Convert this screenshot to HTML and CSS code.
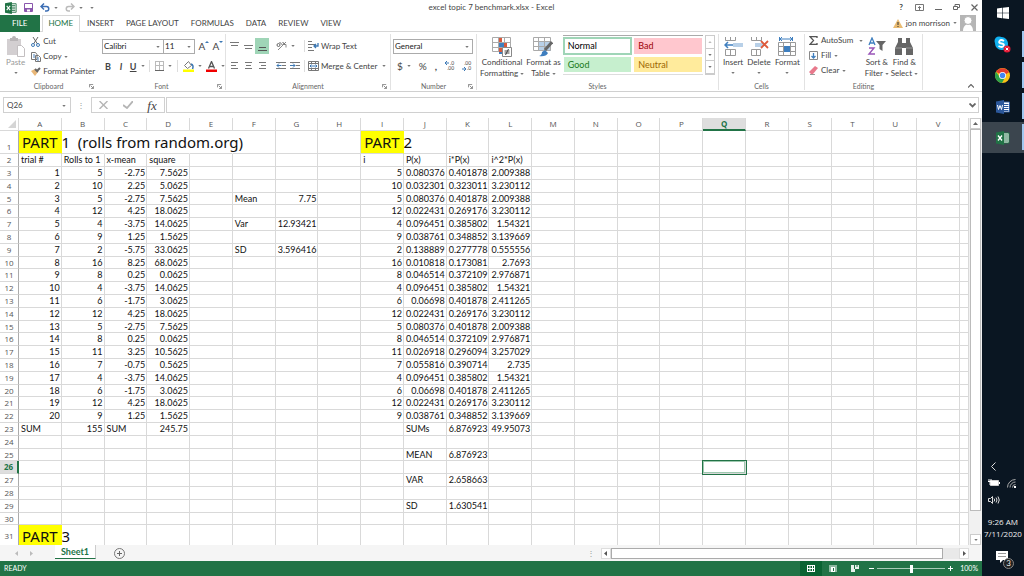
FILE: index.html
```html
<!DOCTYPE html>
<html lang="en">
<head>
<meta charset="utf-8">
<title>excel topic 7 benchmark.xlsx - Excel</title>
<link rel="stylesheet" href="styles.css">
</head>
<body>
<svg class="sprite" aria-hidden="true">
  <symbol id="caret" viewBox="0 0 5 3"><path d="M0 0h5L2.500 3z" fill="#777"/></symbol>
  <symbol id="launch" viewBox="0 0 6 6"><path d="M.5 4V.5H5M2 2l3 3M5.500 2.500v3h-3" fill="none" stroke="#777"/></symbol>
  <symbol id="excel" viewBox="0 0 14 14"><path d="M7 2h6v10H7z" fill="#fff" stroke="#217346"/><path d="M8 4h4M8 6h4M8 8h4M8 10h4" stroke="#217346"/><path d="M0 1.500L8 0v14l-8-1.500z" fill="#217346"/><path d="M2 4.500l4 5M6 4.500l-4 5" stroke="#fff" stroke-width="1.300"/></symbol>
</svg>

<main class="app">
  <header class="titlebar">
    <div class="quick">
      <svg width="12" height="12"><use href="#excel"/></svg>
      <button aria-label="Save"><svg width="9" height="9" viewBox="0 0 9 9"><path d="M.5.5h8v8h-8z" fill="#fff" stroke="#8a57ad"/><path d="M1 5h7v3.500H1z" fill="#8a57ad"/><path d="M3 6.500h3v2H3z" fill="#fff"/></svg></button>
      <button class="drop" aria-label="Undo"><svg width="10" height="9" viewBox="0 0 10 9"><path d="M4 .5L1 3.500l3 3M1 3.500h5.500a2 2 0 0 1 0 4.500H5" fill="none" stroke="#3c6eb4" stroke-width="1.500"/></svg><svg class="caret"><use href="#caret"/></svg></button>
      <button class="drop" aria-label="Redo"><svg width="10" height="9" viewBox="0 0 10 9"><path d="M6 .5l3 3-3 3M9 3.500H3.500a2 2 0 0 0 0 4.500H5" fill="none" stroke="#bbb" stroke-width="1.500"/></svg><svg class="caret"><use href="#caret"/></svg></button>
      <button aria-label="Customize"><svg class="caret"><use href="#caret"/></svg></button>
    </div>
    <h1 class="doc">excel topic 7 benchmark.xlsx - Excel</h1>
    <div class="winbtns">
      <button aria-label="Help"><b>?</b></button>
      <button aria-label="Ribbon display"><svg width="9" height="7" viewBox="0 0 9 7"><path d="M.5.5h8v6h-8zM4.500 6V2.500M3 4l1.500-1.500L6 4" fill="none" stroke="#777"/></svg></button>
      <button aria-label="Minimize"><svg width="7" height="7" viewBox="0 0 7 7"><path d="M0 5.500h7" stroke="#666"/></svg></button>
      <button aria-label="Restore"><svg width="7" height="7" viewBox="0 0 7 7"><path d="M.5 2.500h4v3h-4zM2 2V.5h4.500v3H5" fill="none" stroke="#666"/></svg></button>
      <button aria-label="Close"><svg width="7" height="7" viewBox="0 0 7 7"><path d="M.5.5l6 6M6.500.5l-6 6" stroke="#666" stroke-width="1.200"/></svg></button>
    </div>
  </header>

  <nav class="tabs">
    <a class="file" href="#file">FILE</a>
    <a class="current" href="#home">HOME</a>
    <a href="#insert">INSERT</a>
    <a href="#layout">PAGE LAYOUT</a>
    <a href="#formulas">FORMULAS</a>
    <a href="#data">DATA</a>
    <a href="#review">REVIEW</a>
    <a href="#view">VIEW</a>
    <button class="user"><svg width="10" height="9" viewBox="0 0 10 9"><path d="M5 0l5 9H0z" fill="#e9bb72"/><path d="M5 3v3M5 7v1" stroke="#333"/></svg>jon morrison<svg class="caret"><use href="#caret"/></svg><svg width="16" height="16" viewBox="0 0 16 16"><path d="M0 0h16v16H0z" fill="#b5b5b5"/><path d="M3 16c0-9 10-9 10 0z" fill="#fff"/><circle cx="8" cy="5.500" r="4" fill="#fff" stroke="#b5b5b5"/></svg></button>
  </nav>

  <section class="ribbon">
    <div class="group clipboard">
      <div class="tools">
        <button class="big paste"><svg width="18" height="21" viewBox="0 0 18 21"><path d="M0 3h14v16H0z" fill="#d3cfd1"/><path d="M3 2h2a2 2 0 0 1 4 0h2v3H3z" fill="#b9b5b7"/><path d="M10.500 9.500h4l3 3v8h-7z" fill="#fff" stroke="#c3bfc1"/></svg>Paste<svg class="caret"><use href="#caret"/></svg></button>
        <div class="stack">
          <button><svg width="10" height="10" viewBox="0 0 10 10"><path d="M2 0l4.500 7M7 0L2.500 7" stroke="#666" fill="none"/><circle cx="2" cy="8" r="1.500" fill="none" stroke="#3c78b4"/><circle cx="7" cy="8" r="1.500" fill="none" stroke="#3c78b4"/></svg>Cut</button>
          <button><svg width="10" height="10" viewBox="0 0 10 10"><path d="M.5.500h4l1.500 2v5H.5zM4.500 3.500h3l2 2v4h-5z" fill="#fff" stroke="#777"/><path d="M2 3h2M2 5h2M6 6h2M6 8h2" stroke="#4a82bd"/></svg>Copy<svg class="caret"><use href="#caret"/></svg></button>
          <button><svg width="10" height="10" viewBox="0 0 10 10"><path d="M0 4l4-2 3 3-3 4z" fill="#e9b778"/><path d="M4 2l3 3M6 4l3-3" stroke="#666" stroke-width="2"/></svg>Format Painter</button>
        </div>
      </div>
      <footer>Clipboard<svg class="launch"><use href="#launch"/></svg></footer>
    </div>

    <div class="group font">
      <div class="tools rows">
        <div class="line">
          <div class="combo"><label class="pick face"><select aria-label="Font"><option>Calibri</option></select><svg class="caret"><use href="#caret"/></svg></label><label class="pick size"><select aria-label="Font size"><option>11</option></select><svg class="caret"><use href="#caret"/></svg></label></div>
          <button class="grow" aria-label="Increase font size">A<svg width="4" height="3" viewBox="0 0 4 3"><path d="M0 2l2-2 2 2z" fill="#3c78b4"/></svg></button>
          <button class="grow" aria-label="Decrease font size">A<svg width="4" height="3" viewBox="0 0 4 3"><path d="M0 0l2 2 2-2z" fill="#3c78b4"/></svg></button>
        </div>
        <div class="line fmt">
          <button aria-label="Bold"><b>B</b></button>
          <button aria-label="Italic"><b><i>I</i></b></button>
          <button class="drop" aria-label="Underline"><b><u>U</u></b><svg class="caret"><use href="#caret"/></svg></button>
          <span class="sep"></span>
          <button class="drop" aria-label="Borders"><svg width="9" height="10" viewBox="0 0 9 10"><path d="M.5 0v9M4.500 0v9M8.500 0v9M0 .5h9M0 4.500h9" stroke="#bbb"/><path d="M0 9.500h9" stroke="#666"/></svg><svg class="caret"><use href="#caret"/></svg></button>
          <span class="sep"></span>
          <button class="drop" aria-label="Fill color"><svg width="11" height="11" viewBox="0 0 11 11"><path d="M1.500 4.500l4-4 3 4-4 3z" fill="#fff" stroke="#777"/><path d="M8 3q3 1 1.500 5" fill="none" stroke="#3c78b4" stroke-width="1.500"/><path d="M0 8.500h11v2.500H0z" fill="#ff0"/></svg><svg class="caret"><use href="#caret"/></svg></button>
          <button class="drop" aria-label="Font color"><svg width="11" height="11" viewBox="0 0 11 11"><path d="M2.500 7.500l3-7 3 7M3.500 5.500h4" fill="none" stroke="#555" stroke-width="1.300"/><path d="M0 8.500h11v2.500H0z" fill="#f00000"/></svg><svg class="caret"><use href="#caret"/></svg></button>
        </div>
      </div>
      <footer>Font<svg class="launch"><use href="#launch"/></svg></footer>
    </div>

    <div class="group align">
      <div class="tools rows">
        <div class="line">
          <button class="sq" aria-label="Top align"><svg width="9" height="11" viewBox="0 0 9 11"><path d="M0 1.500h9M1 4.500h7" stroke="#777"/></svg></button>
          <button class="sq" aria-label="Middle align"><svg width="9" height="11" viewBox="0 0 9 11"><path d="M0 4.500h9M1 7.500h7" stroke="#777"/></svg></button>
          <button class="sq on" aria-label="Bottom align"><svg width="9" height="11" viewBox="0 0 9 11"><path d="M1 6.500h7M0 9.500h9" stroke="#555"/></svg></button>
          <button class="drop orient" aria-label="Orientation"><svg width="11" height="10" viewBox="0 0 11 10"><path d="M2 9l8-8M7 3.500h3v3" fill="none" stroke="#888"/><circle cx="2.500" cy="4" r="1.500" fill="none" stroke="#666"/><path d="M3.500 1l3 3M6.500 1.500q2 0 1.500 2" fill="none" stroke="#666"/></svg><svg class="caret"><use href="#caret"/></svg></button>
          <span class="sep"></span>
          <button class="txt"><svg width="11" height="10" viewBox="0 0 11 10"><path d="M0 .5h4M0 3.500h8M0 6.500h4M0 9.500h6" stroke="#777"/><path d="M10 2v3H6M8 3L6 5l2 2" fill="none" stroke="#3c78b4" stroke-width="1.300"/></svg>Wrap Text</button>
        </div>
        <div class="line">
          <button class="sq" aria-label="Align left"><svg width="9" height="8" viewBox="0 0 9 8"><path d="M1 .5h7M1 3.500h5M1 6.500h7" stroke="#777"/></svg></button>
          <button class="sq" aria-label="Center"><svg width="9" height="8" viewBox="0 0 9 8"><path d="M1 .5h7M2 3.500h5M1 6.500h7" stroke="#777"/></svg></button>
          <button class="sq" aria-label="Align right"><svg width="9" height="8" viewBox="0 0 9 8"><path d="M1 .5h7M3 3.500h5M1 6.500h7" stroke="#777"/></svg></button>
          <button class="sq first" aria-label="Decrease indent"><svg width="10" height="8" viewBox="0 0 10 8"><path d="M0 .5h10M6 3.500h4M0 6.500h10" stroke="#777"/><path d="M5.500 3.500H1M3 1.500l-2 2 2 2" fill="none" stroke="#3c78b4"/></svg></button>
          <button class="sq" aria-label="Increase indent"><svg width="10" height="8" viewBox="0 0 10 8"><path d="M0 .5h10M6 3.500h4M0 6.500h10" stroke="#777"/><path d="M0 3.500h5M3 1.500l2 2-2 2" fill="none" stroke="#3c78b4"/></svg></button>
          <span class="sep"></span>
          <button class="txt"><svg width="11" height="10" viewBox="0 0 11 10"><path d="M.5.5h10v9H.5zM.5 2.500h10M.5 7.500h10M3.500 0v2M7.500 0v2M3.500 8v2M7.500 8v2" fill="none" stroke="#777"/><path d="M2 5h7M3.500 3.500L2 5l1.500 1.500M7.500 3.500L9 5 7.500 6.500" fill="none" stroke="#3c78b4"/></svg>Merge &amp; Center<svg class="caret"><use href="#caret"/></svg></button>
        </div>
      </div>
      <footer>Alignment<svg class="launch"><use href="#launch"/></svg></footer>
    </div>

    <div class="group number">
      <div class="tools rows">
        <div class="line"><label class="pick wide"><select aria-label="Number format"><option>General</option></select><svg class="caret"><use href="#caret"/></svg></label></div>
        <div class="line nums">
          <button class="drop">$<svg class="caret"><use href="#caret"/></svg></button>
          <button>%</button>
          <button><b>,</b></button>
          <button class="dec" aria-label="Increase decimal"><span>.0</span><span>.00</span><svg width="4" height="4" viewBox="0 0 4 4"><path d="M0 2h4M2 0L0 2l2 2" stroke="#3c78b4" fill="none"/></svg></button>
          <button class="dec low" aria-label="Decrease decimal"><span>.00</span><span>.0</span><svg width="4" height="4" viewBox="0 0 4 4"><path d="M0 2h4M2 0l2 2-2 2" stroke="#3c78b4" fill="none"/></svg></button>
        </div>
      </div>
      <footer>Number<svg class="launch"><use href="#launch"/></svg></footer>
    </div>

    <div class="group styles">
      <div class="tools">
        <button class="big"><svg width="20" height="20" viewBox="0 0 20 20"><path d="M.5.5h18v14H.5zM0 5.500h19M0 10.500h19M6.500 0v15M12.500 0v15" fill="none" stroke="#aaa"/><path d="M7 1h3v4H7zM7 11h3v4H7z" fill="#d9593c"/><path d="M7 6h5v4H7zM7 15h4v2H7z" fill="#3f7fbf"/><path d="M12 6h3v4h-3z" fill="#d9593c"/><path d="M10.500 10.500h9v9h-9z" fill="#fff" stroke="#888"/><path d="M12.500 14h5M12.500 16h5M16.500 12l-3 6" stroke="#444"/></svg><span>Conditional</span><span>Formatting <svg class="caret"><use href="#caret"/></svg></span></button>
        <button class="big"><svg width="20" height="20" viewBox="0 0 20 20"><path d="M6 5h12v9H6z" fill="#b8d0e8"/><path d="M.5.500h17v13H.5zM0 4.500h18M0 9.500h18M5.500 0v14M11.500 0v14" fill="none" stroke="#aaa"/><path d="M19 5l-7 8" stroke="#666" stroke-width="3"/><path d="M6 19q3-1 3-4l3-2 3 3q-2 4-9 3z" fill="#3f7fbf"/></svg><span>Format as</span><span>Table <svg class="caret"><use href="#caret"/></svg></span></button>
        <div class="gallery">
          <button class="normal">Normal</button><button class="bad">Bad</button>
          <button class="good">Good</button><button class="neutral">Neutral</button>
        </div>
        <div class="spin">
          <button aria-label="Scroll up"><svg width="4" height="2" viewBox="0 0 5 3"><path d="M0 3h5L2.500 0z" fill="#bbb"/></svg></button>
          <button aria-label="Scroll down"><svg class="caret"><use href="#caret"/></svg></button>
          <button aria-label="More styles"><svg class="caret"><use href="#caret"/></svg></button>
        </div>
      </div>
      <footer>Styles</footer>
    </div>

    <div class="group cells">
      <div class="tools">
        <button class="big"><svg width="19" height="20" viewBox="0 0 19 20"><path d="M1.500 0v3.500h10V0M6.500 0v4M1.500 12.500h10v6h-10zM6.500 12v7" fill="none" stroke="#999"/><path d="M9 6h10v4H9z" fill="#b8d0e8"/><path d="M9 8H1M4 5L1 8l3 3" fill="none" stroke="#3f7fbf" stroke-width="1.500"/></svg><span>Insert</span><svg class="caret"><use href="#caret"/></svg></button>
        <button class="big"><svg width="19" height="20" viewBox="0 0 19 20"><path d="M1.500 0v3.500h10V0M6.500 0v4M1.500 12.500h9v6h-9zM6.500 12v7" fill="none" stroke="#999"/><path d="M5 6h8v4H5z" fill="#b8d0e8"/><path d="M11 4l7 7M18 4l-7 7" stroke="#dd5a3c" stroke-width="1.800"/></svg><span>Delete</span><svg class="caret"><use href="#caret"/></svg></button>
        <button class="big"><svg width="20" height="20" viewBox="0 0 20 20"><path d="M3 2h12M5 0L3 2l2 2M13 0l2 2-2 2M2.500 0v4M15.500 0v4" fill="none" stroke="#3f7fbf"/><path d="M1.500 5.500h17v13h-17zM6.500 5v14M13.500 5v14M1 9.500h18M1 14.500h18" fill="none" stroke="#999"/><path d="M7 9h6v6H7z" fill="#3f7fbf"/></svg><span>Format</span><svg class="caret"><use href="#caret"/></svg></button>
      </div>
      <footer>Cells</footer>
    </div>

    <div class="group editing">
      <div class="tools">
        <div class="stack">
          <button><svg width="9" height="9" viewBox="0 0 9 9"><path d="M8 2V.7H1l3.500 3.800L1 8.300h7V7" fill="none" stroke="#555" stroke-width="1.300"/></svg>AutoSum <svg class="caret sum"><use href="#caret"/></svg></button>
          <button><svg width="9" height="9" viewBox="0 0 9 9"><path d="M.5.5h8v8h-8z" fill="#fff" stroke="#888"/><path d="M4.500 2v5M2.500 5l2 2 2-2" fill="none" stroke="#3f7fbf" stroke-width="1.300"/></svg>Fill<svg class="caret"><use href="#caret"/></svg></button>
          <button><svg width="9" height="9" viewBox="0 0 9 9"><path d="M0 6l6-6 3 2-5 6H2z" fill="#e8798c"/><path d="M1 8.500h5" stroke="#999"/></svg>Clear<svg class="caret"><use href="#caret"/></svg></button>
        </div>
        <button class="big"><svg width="20" height="20" viewBox="0 0 20 20"><path d="M2 8l3-7 3 7M3 6h4" fill="none" stroke="#3f7fbf" stroke-width="1.300"/><path d="M2 11h5l-5 6h6" fill="none" stroke="#9a55b8" stroke-width="1.400"/><path d="M9 4h10l-3.500 4v6l-3-2V8z" fill="#666"/></svg><span>Sort &amp;</span><span>Filter <svg class="caret"><use href="#caret"/></svg></span></button>
        <button class="big"><svg width="20" height="20" viewBox="0 0 20 20"><path d="M4 1h4v5h4V1h4v4l3 6v7h-7v-7H8v7H1v-7l3-6z" fill="#666"/><path d="M1 11h7M12 11h7" stroke="#999"/></svg><span>Find &amp;</span><span>Select <svg class="caret"><use href="#caret"/></svg></span></button>
      </div>
      <footer>Editing</footer>
    </div>
    <button class="collapse" aria-label="Collapse ribbon"><svg width="6" height="4" viewBox="0 0 6 4"><path d="M0 3.500L3 .5l3 3" fill="none" stroke="#666" stroke-width="1.200"/></svg></button>
  </section>

  <section class="formula">
    <label class="name"><input aria-label="Name box" value="Q26"><svg class="caret"><use href="#caret"/></svg></label>
    <span class="dots">⋮</span>
    <div class="fx">
      <button aria-label="Cancel"><svg width="9" height="8" viewBox="0 0 9 8"><path d="M.5 0l8 8M8.500 0l-8 8" stroke="#b5b5b5" stroke-width="1.400"/></svg></button>
      <button aria-label="Enter"><svg width="10" height="8" viewBox="0 0 10 8"><path d="M0 4l4 3 6-7" fill="none" stroke="#b5b5b5" stroke-width="1.800"/></svg></button>
      <button class="fn" aria-label="Insert function"><i>fx</i></button>
    </div>
    <label class="bar"><input aria-label="Formula"><svg width="7" height="5" viewBox="0 0 7 5"><path d="M.5.500l3 3 3-3" fill="none" stroke="#666" stroke-width="1.800"/></svg></label>
  </section>

  <section class="work">
    <table class="sheet"><thead></thead><tbody></tbody></table>
    <div class="vscroll">
      <button aria-label="Up"><svg width="5" height="3" viewBox="0 0 5 3"><path d="M0 3h5L2.500 0z" fill="#666"/></svg></button>
      <div class="thumb"></div>
      <button aria-label="Down"><svg class="caret"><use href="#caret"/></svg></button>
    </div>
  </section>

  <section class="sheets">
    <button class="arrow" aria-label="Previous sheet"><svg width="3" height="5" viewBox="0 0 3 5"><path d="M3 0v5L0 2.500z" fill="#bbb"/></svg></button>
    <button class="arrow" aria-label="Next sheet"><svg width="3" height="5" viewBox="0 0 3 5"><path d="M0 0v5l3-2.500z" fill="#bbb"/></svg></button>
    <a class="sheet-tab" href="#sheet1">Sheet1</a>
    <button class="add" aria-label="New sheet"><svg width="11" height="11" viewBox="0 0 11 11"><circle cx="5.500" cy="5.500" r="5" fill="none" stroke="#777"/><path d="M5.500 3v5M3 5.500h5" stroke="#666"/></svg></button>
    <span class="dots">⋮</span>
    <div class="hscroll">
      <button aria-label="Left"><svg width="3" height="5" viewBox="0 0 3 5"><path d="M3 0v5L0 2.500z" fill="#555"/></svg></button>
      <div class="thumb"></div>
      <button aria-label="Right"><svg width="3" height="5" viewBox="0 0 3 5"><path d="M0 0v5l3-2.500z" fill="#555"/></svg></button>
    </div>
  </section>

  <footer class="status">
    <span class="ready">READY</span>
    <button class="view on" aria-label="Normal view"><svg width="8" height="7" viewBox="0 0 8 7"><path d="M0 .5h8M0 3.500h8M0 6.500h8M.5 0v7M3 0v7M5.500 0v7M7.500 0v7" stroke="#fff"/></svg></button>
    <button class="view" aria-label="Page layout"><svg width="8" height="7" viewBox="0 0 8 7"><path d="M0 0h8v7H0z" fill="#8db8a0"/><path d="M2 2h4v5H2z" fill="#fff"/><path d="M4.500 3v3" stroke="#217346"/></svg></button>
    <button class="view" aria-label="Page break"><svg width="8" height="7" viewBox="0 0 8 7"><path d="M0 0h8v4H4v3H0z" fill="#e8f2ec"/><path d="M3.500 0v4M6 0v2" stroke="#217346"/></svg></button>
    <button class="zoomb" aria-label="Zoom out"><svg width="5" height="5" viewBox="0 0 5 5"><path d="M0 2.500h5" stroke="#fff"/></svg></button>
    <input class="zoom" type="range" aria-label="Zoom" min="0" max="200" value="100">
    <button class="zoomb" aria-label="Zoom in"><svg width="5" height="5" viewBox="0 0 5 5"><path d="M0 2.500h5M2.500 0v5" stroke="#fff"/></svg></button>
    <span class="pct">100%</span>
  </footer>
</main>

<aside class="taskbar">
  <button class="task" aria-label="Start"><svg width="12" height="12" viewBox="0 0 12 12"><path d="M0 1.500l5-.7v4.900H0zM5.600.7L12 0v5.700H5.600zM0 6.300h5v4.900l-5-.7zM5.600 6.300H12V12l-6.400-.8z" fill="#fff"/></svg></button>
  <button class="task open" aria-label="Skype"><svg width="17" height="17" viewBox="0 0 17 17"><circle cx="5" cy="5" r="4.500" fill="#10b0f0"/><circle cx="9.500" cy="9.500" r="4.500" fill="#10b0f0"/><circle cx="7.500" cy="7.500" r="6.500" fill="#10b0f0"/><path d="M10 5Q7 3 5.500 5T7.500 7.500 9.500 10 4.500 10" fill="none" stroke="#fff" stroke-width="1.800"/><circle cx="13" cy="13" r="3.500" fill="#e81a35"/><path d="M11.700 11.700l2.600 2.600M14.300 11.700l-2.600 2.600" stroke="#fff"/></svg></button>
  <button class="task open" aria-label="Chrome"><svg width="15" height="15" viewBox="0 0 15 15"><circle cx="7.500" cy="7.500" r="7.500" fill="#fbc116"/><path d="M7.500 7.500L1 3.800A7.500 7.500 0 0 1 14 4z" fill="#e33b2e"/><path d="M1 3.800A7.500 7.500 0 0 0 7 15l3-5.500H5z" fill="#2ba24c"/><path d="M5 4h9l-4 3H5z" fill="#e33b2e"/><circle cx="7.500" cy="7.500" r="3.500" fill="#fff"/><circle cx="7.500" cy="7.500" r="2.700" fill="#4285f4"/></svg></button>
  <button class="task open" aria-label="Word"><svg width="14" height="14" viewBox="0 0 14 14"><path d="M7 2h6.500v10H7z" fill="#fff" stroke="#2b579a"/><path d="M8 4.500h4.500M8 6.500h4.500M8 8.500h4.500M8 10.500h4.500" stroke="#2b579a"/><path d="M0 1.500L8 0v14l-8-1.500z" fill="#2b579a"/><path d="M1.500 5l1 4.500L4 5.500l1.500 4L6.500 5" fill="none" stroke="#fff"/></svg></button>
  <button class="task open active" aria-label="Excel"><svg width="14" height="14"><use href="#excel"/></svg></button>
  <div class="tray">
    <button aria-label="Show hidden icons"><svg width="6" height="9" viewBox="0 0 6 9"><path d="M5.500.500l-4 4 4 4" fill="none" stroke="#ddd"/></svg></button>
    <div class="pair">
      <svg width="12" height="8" viewBox="0 0 12 8"><path d="M2.500 1.500h8v5h-8z" fill="#fff" stroke="#ccc"/><path d="M11.500 3v2M1 0v3M3 0v3M0 2.500h4M2 3v3" stroke="#fff"/></svg>
      <svg width="9" height="9" viewBox="0 0 9 9"><path d="M.5 8.500a8 8 0 0 1 8-8M3 8.500A5.500 5.500 0 0 1 8.500 3M5.500 8.500a3 3 0 0 1 3-3" fill="none" stroke="#aaa"/><path d="M7 7h2v2H7z" fill="#fff"/></svg>
    </div>
    <svg width="12" height="8" viewBox="0 0 12 8"><path d="M.5 2.500h2l2-2v7l-2-2h-2zM6 2.500q1.500 1.500 0 3M8 1.500q2 2.500 0 5M10 .5q2.500 3.500 0 7" fill="none" stroke="#ddd"/></svg>
    <time class="clock">9:26 AM<br>7/11/2020</time>
    <button class="note" aria-label="Notifications"><svg width="12" height="12" viewBox="0 0 12 12"><path d="M0 0h12v9H7l-3 3V9H0z" fill="#fff"/><path d="M2 2.500h8M2 5.500h8" stroke="#999"/></svg><span class="badge">3</span></button>
  </div>
</aside>
<script src="sheet.js"></script>
</body>
</html>
```

FILE: styles.css
```css
* { box-sizing: border-box; }
body {
  margin: 0;
  height: 100vh;
  display: flex;
  overflow: hidden;
  background: #fff;
  color: #444;
  font: 8px/11px Lato, "Noto Sans", sans-serif;
}
button, input, select { font: inherit; color: inherit; border: 0; margin: 0; padding: 0; background: none; outline: 0; border-radius: 0; }
button { display: inline-flex; align-items: center; justify-content: center; white-space: nowrap; }
a { color: inherit; text-decoration: none; }
svg { display: block; flex: none; }
.sprite { position: absolute; width: 0; height: 0; }
.caret { width: 4px; height: 2px; }
.launch { width: 5px; height: 5px; }
.app { flex: 1; min-width: 0; display: flex; flex-direction: column; }

.titlebar { display: flex; align-items: center; height: 15px; padding: 0 4px 0 5px; }
.quick, .winbtns { flex: 1; display: flex; align-items: center; }
.quick { gap: 7px; }
.drop { gap: 4px; }
.doc { margin: 0; font-size: 8px; font-weight: 400; }
.winbtns { justify-content: flex-end; gap: 10px; }
.winbtns button { min-width: 8px; }

.tabs { display: flex; height: 17px; border-bottom: 1px solid #d8d8d8; }
.tabs a { padding: 3px 6px 0; height: 17px; }
.tabs .file { background: #217346; color: #fff; padding: 3px 12px 0; margin-right: 2px; }
.tabs .current { background: #fff; border: 1px solid #d8d8d8; border-bottom: 0; color: #217346; padding: 2px 6px 0; margin-right: 1px; }
.user { margin-left: auto; gap: 3px; padding-right: 6px; }

.ribbon { display: flex; height: 60px; padding-top: 2px; border-bottom: 1px solid #d0d0d0; }
.group { display: flex; flex-direction: column; border-right: 1px solid #e2e2e2; margin-bottom: 1px; }
.group footer { position: relative; text-align: center; font-size: 7px; line-height: 8px; color: #666; margin-top: auto; }
.group footer .launch { position: absolute; right: 3px; bottom: 1px; }
.tools { display: flex; height: 46px; }
.rows { flex-direction: column; padding: 4px 0 0 4px; gap: 4px; }
.line { display: flex; align-items: center; height: 16px; }
.stack { display: flex; flex-direction: column; align-items: flex-start; gap: 4px; }
.stack button { height: 11px; gap: 3px; }
.big { flex-direction: column; justify-content: flex-start; }
.big > .caret { margin-top: 4px; }
.big span { display: flex; align-items: center; gap: 2px; }
.sep { width: 1px; height: 12px; background: #ddd; }

.clipboard { width: 98px; border-right-color: transparent; }
.clipboard .tools { padding: 2px 0 0 6px; gap: 6px; }
.clipboard .stack button { gap: 2px; }
.paste { color: #999; }
.font { width: 128px; }
.combo { display: flex; margin-right: 2px; }
.pick { position: relative; display: block; height: 15px; border: 1px solid #ababab; }
.pick select { appearance: none; width: 100%; height: 13px; padding-left: 1px; color: #222; background: #fff; }
.pick .caret { position: absolute; right: 3px; top: 6px; }
.face { width: 62px; }
.size { width: 32px; margin-left: -1px; }
.grow { font-size: 10px; width: 14px; align-items: flex-start; }
.fmt { padding-left: 2px; gap: 5px; }
.fmt button { min-width: 8px; }
.fmt b { font-size: 9px; }
.align { width: 165px; }
.align .rows { padding-left: 1px; }
.sq { width: 14px; height: 16px; }
.on { background: #9fd5b7; }
.orient { margin-left: 6px; width: 20px; }
.first { margin-left: 5px; }
.align .sep { margin: 0 3px 0 2px; }
.align .line:first-child .sep { margin-left: 9px; }
.txt { gap: 2px; }
.txt .caret { margin-left: 3px; }
.number { width: 86px; }
.number .rows { padding-left: 2px; }
.wide { width: 80px; }
.nums { padding-left: 4px; gap: 8px; font-size: 10px; }
.dec { position: relative; flex-direction: column; align-items: flex-end; width: 9px; font-size: 5px; line-height: 5px; }
.dec svg { position: absolute; left: 0; top: 0; }
.dec.low svg { top: 6px; }
.styles { width: 242px; }
.styles .tools { padding: 1px 0 0 3px; gap: 2px; }
.styles .big, .cells .big, .editing .big { padding-top: 2px; }
.gallery { flex: 1; display: grid; grid-template-columns: 1fr 1fr; grid-template-rows: 1fr 1fr; gap: 1px; height: 40px; padding: 1px 0; border-top: 1px solid #aaa; border-bottom: 1px solid #ddd; }
.gallery button { justify-content: flex-start; padding-left: 4px; margin: 1px; font-size: 9px; }
.gallery .normal { border: 2px solid #9fd5b7; color: #000; margin: 0; padding-left: 3px; }
.bad { background: #ffc7ce; color: #9c0006; }
.good { background: #c6efce; color: #1a7a1a; }
.neutral { background: #ffeb9c; color: #9c6500; }
.spin { display: flex; flex-direction: column; width: 10px; height: 40px; margin-right: 3px; border: 1px solid #ccc; }
.spin button { flex: 1; border-bottom: 1px solid #ccc; }
.cells { width: 86px; }
.cells .tools { justify-content: space-around; padding: 1px 2px 0; }
.editing { width: 118px; }
.editing .tools { padding: 1px 4px 0; justify-content: space-between; }
.editing .stack { width: 54px; }
.sum { margin-left: 3px; }
.collapse { margin: auto 8px 3px auto; }

.formula { display: flex; height: 26px; padding: 5px 3px 5px; align-items: stretch; }
.name { position: relative; width: 68px; border: 1px solid #d0d0d0; display: flex; }
.name input { width: 100%; padding-left: 3px; }
.name .caret { position: absolute; right: 4px; top: 7px; }
.dots { width: 20px; text-align: center; color: #999; align-self: center; }
.fx { width: 74px; display: flex; align-items: center; justify-content: space-around; border: 1px solid #d0d0d0; }
.fn { font: 13px/13px "Liberation Serif", serif; }
.bar { flex: 1; display: flex; align-items: center; margin-left: 1px; border: 1px solid #d0d0d0; padding-right: 2px; }
.bar input { flex: 1; }

.work { flex: 1; min-height: 0; overflow: hidden; display: flex; align-items: stretch; }
.sheet { flex: 1; width: 0; table-layout: fixed; border-collapse: separate; border-spacing: 0; align-self: flex-start; font-size: 9px; line-height: 12px; color: #111; }
.sheet th, .sheet td { padding: 0; height: 13px; border: 0 solid #d9d9d9; border-width: 0 1px 1px 0; white-space: pre; }
.sheet tr:nth-child(5n) > * { height: 12px; line-height: 11px; }
.sheet th { font-weight: 400; color: #555; font-size: 8px; font-family: "Open Sans", sans-serif; }
.sheet tbody th { border-right-color: #ababab; }
.sheet td { padding: 0 0 0 2px; }
.sheet .num { text-align: right; padding-right: 1px; }
.sheet .corner { width: 19px; text-align: right; }
.corner svg { display: inline-block; vertical-align: bottom; margin: 0 2px 2px 0; }
.sheet .edge { width: 9px; }
.sheet .tall > * { height: 23px; line-height: 22px; }
.sheet .tall th { vertical-align: bottom; line-height: 13px; }
.sheet .tall:last-child > * { vertical-align: middle; line-height: 22px; }
.sheet .title { background: #ff0; font-family: "Noto Sans", sans-serif; font-size: 15px; padding-left: 3px; }
.sheet .spill { border-right-color: transparent; }
.sheet th.sel { background: #dedede; color: #217346; font-weight: 700; }
.sheet thead .sel { border-bottom: 2px solid #217346; line-height: 11px; }
.sheet tbody th.sel { border-right: 2px solid #217346; }
.sheet .active { outline: 1px solid #217346; box-shadow: inset 0 0 0 1px #9fc9b0; }
.vscroll { width: 13px; padding: 0 1px; display: flex; flex-direction: column; background: #f1f1f1; }
.vscroll button { height: 11px; background: #fff; border: 1px solid #ccc; }
.vscroll .thumb { height: 382px; margin-bottom: auto; background: #fff; border: 1px solid #bbb; }

.sheets { display: flex; align-items: center; height: 16px; background: #f5f5f5; padding-right: 13px; }
.arrow { width: 15px; }
.arrow:first-child { margin-left: 9px; }
.sheet-tab { align-self: flex-start; margin: 0 18px 0 16px; height: 14px; padding: 0 6px; background: #fff; border-bottom: 1px solid #217346; border-right: 1px solid #ccc; color: #217346; font-weight: 700; font-size: 9px; line-height: 13px; }
.sheets .dots { margin-left: auto; }
.hscroll { width: 38%; height: 11px; display: flex; background: #e9e9e9; }
.hscroll button { width: 10px; background: #fff; border: 1px solid #ddd; }
.hscroll .thumb { flex: 1; margin-right: 16px; background: #fff; border: 1px solid #ababab; }

.status { display: flex; align-items: center; height: 15px; background: #217346; color: #fff; font-size: 7px; padding: 0 4px; }
.ready { margin-right: auto; }
.view { width: 22px; height: 15px; }
.view.on { background: #0a6332; }
.zoomb { width: 11px; height: 15px; }
.zoom { appearance: none; width: 68px; height: 1px; background: #a8cbb7; }
.zoom::-webkit-slider-thumb { appearance: none; width: 3px; height: 8px; background: #fff; }
.pct { width: 22px; text-align: right; }

.taskbar { width: 42px; background: #0a1622; color: #eee; display: flex; flex-direction: column; }
.task { height: 31px; width: 42px; padding-right: 1px; position: relative; }
.task:first-child { height: 29px; padding-bottom: 3px; }
.task.active { background: #3b454e; }
.task.open::after { content: ""; position: absolute; right: 0; top: 2px; width: 2px; height: 26px; background: #a0c8f0; }
.tray { margin-top: auto; display: flex; flex-direction: column; align-items: flex-start; padding: 0 0 7px 6px; gap: 8px; }
.tray > button:first-child { margin-left: 2px; }
.pair { display: flex; gap: 7px; }
.clock { font: 8px/12px "Open Sans", sans-serif; text-align: center; margin: 4px 0 0 -4px; }
.note { position: relative; margin: 3px 0 0 8px; width: 18px; height: 18px; align-items: flex-start; justify-content: flex-start; }
.badge { position: absolute; right: 0; bottom: 0; width: 11px; height: 11px; border: 1px solid #888; border-radius: 50%; background: #222; font-size: 8px; line-height: 9px; text-align: center; }
```

FILE: sheet.js
```js
const columns = "ABCDEFGHIJKLMNOPQRSTUV".split("");
const trials = [
  [5, "-2.75", "7.5625", "0.080376", "0.401878", "2.009388"],
  [10, "2.25", "5.0625", "0.032301", "0.323011", "3.230112"],
  [5, "-2.75", "7.5625", "0.080376", "0.401878", "2.009388"],
  [12, "4.25", "18.0625", "0.022431", "0.269176", "3.230112"],
  [4, "-3.75", "14.0625", "0.096451", "0.385802", "1.54321"],
  [9, "1.25", "1.5625", "0.038761", "0.348852", "3.139669"],
  [2, "-5.75", "33.0625", "0.138889", "0.277778", "0.555556"],
  [16, "8.25", "68.0625", "0.010818", "0.173081", "2.7693"],
  [8, "0.25", "0.0625", "0.046514", "0.372109", "2.976871"],
  [4, "-3.75", "14.0625", "0.096451", "0.385802", "1.54321"],
  [6, "-1.75", "3.0625", "0.06698", "0.401878", "2.411265"],
  [12, "4.25", "18.0625", "0.022431", "0.269176", "3.230112"],
  [5, "-2.75", "7.5625", "0.080376", "0.401878", "2.009388"],
  [8, "0.25", "0.0625", "0.046514", "0.372109", "2.976871"],
  [11, "3.25", "10.5625", "0.026918", "0.296094", "3.257029"],
  [7, "-0.75", "0.5625", "0.055816", "0.390714", "2.735"],
  [4, "-3.75", "14.0625", "0.096451", "0.385802", "1.54321"],
  [6, "-1.75", "3.0625", "0.06698", "0.401878", "2.411265"],
  [12, "4.25", "18.0625", "0.022431", "0.269176", "3.230112"],
  [9, "1.25", "1.5625", "0.038761", "0.348852", "3.139669"]
];
const cells = {
  A1: "PART 1  (rolls from random.org)", I1: "PART 2", A31: "PART 3",
  A2: "trial #", B2: "Rolls to 1", C2: "x-mean", D2: "square",
  I2: "i", J2: "P(x)", K2: "i*P(x)", L2: "i^2*P(x)",
  F5: "Mean", G5: "7.75", F7: "Var", G7: "12.93421", F9: "SD", G9: "3.596416",
  A23: "SUM", B23: "155", C23: "SUM", D23: "245.75",
  J23: "SUMs", K23: "6.876923", L23: "49.95073",
  J25: "MEAN", K25: "6.876923", J27: "VAR", K27: "2.658663", J29: "SD", K29: "1.630541"
};
trials.forEach(([roll, diff, square, p, ip, iip], n) => {
  const values = { A: n + 1, B: roll, C: diff, D: square, I: roll, J: p, K: ip, L: iip };
  for (const col in values) cells[col + (n + 3)] = String(values[col]);
});
const spill = ["A1", "B1", "C1", "D1", "E1", "I1", "A31"];

function add(row, tag, text, cls) {
  const el = document.createElement(tag);
  el.textContent = text;
  if (cls) el.className = cls;
  row.append(el);
  return el;
}

const head = document.querySelector(".sheet thead").insertRow();
add(head, "th", "", "corner").innerHTML =
  '<svg width="8" height="8" viewBox="0 0 8 8"><path d="M8 0v8H0z" fill="#d5d5d5"/></svg>';
columns.forEach(c => add(head, "th", c, c === "Q" ? "sel" : ""));
add(head, "th", "", "edge");

const body = document.querySelector(".sheet tbody");
for (let r = 1; r <= 31; r++) {
  const row = body.insertRow();
  if (r === 1 || r === 31) row.className = "tall";
  add(row, "th", r, r === 26 ? "sel" : "");
  for (const c of columns) {
    const id = c + r;
    const text = cells[id] || "";
    const cls = [];
    if (text.startsWith("PART")) cls.push("title");
    else if (text && !isNaN(text)) cls.push("num");
    if (spill.includes(id)) cls.push("spill");
    if (id === "Q26") cls.push("active");
    add(row, "td", text, cls.join(" "));
  }
  add(row, "td", "", "");
}
```
